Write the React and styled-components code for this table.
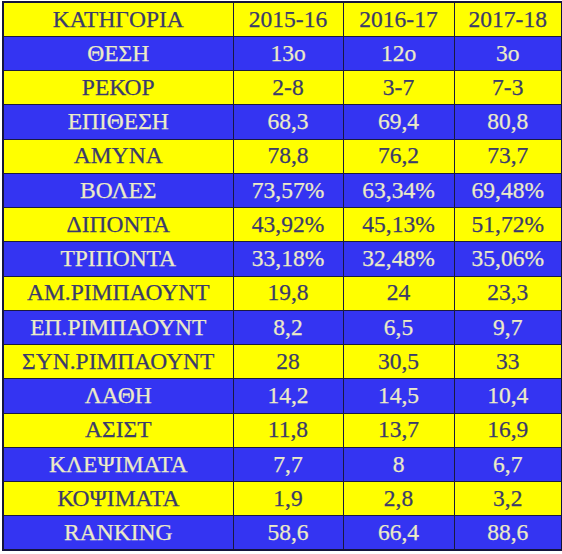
import React from 'react';
import styled, { createGlobalStyle } from 'styled-components';

const GlobalStyle = createGlobalStyle`
  body {
    margin: 0;
    background: #ffffff;
    font-family: "Liberation Serif", "Times New Roman", serif;
  }
`;

const Page = styled.div`
  padding: 1px 0 0 2px;
`;

const Table = styled.table`
  border-collapse: collapse;
  width: 559px;
  table-layout: fixed;
  border: 2px solid #14143c;
`;

const Row = styled.tr`
  height: 34.25px;
  background: ${(p) => (p.$blue ? '#3434f2' : '#ffff00')};
  color: ${(p) => (p.$blue ? '#ecebc6' : '#3a3a6c')};
`;

const Cell = styled.td`
  border: 1px solid #1a1a40;
  text-align: center;
  padding: 0;
  line-height: 1;
  font-family: "Liberation Serif", "Times New Roman", serif;
  font-size: 23.5px;
  -webkit-text-stroke: 0.25px currentColor;
`;

const columns = ['ΚΑΤΗΓΟΡΙΑ', '2015-16', '2016-17', '2017-18'];

const rows = [
  ['ΘΕΣΗ', '13ο', '12ο', '3ο'],
  ['ΡΕΚΟΡ', '2-8', '3-7', '7-3'],
  ['ΕΠΙΘΕΣΗ', '68,3', '69,4', '80,8'],
  ['ΑΜΥΝΑ', '78,8', '76,2', '73,7'],
  ['ΒΟΛΕΣ', '73,57%', '63,34%', '69,48%'],
  ['ΔΙΠΟΝΤΑ', '43,92%', '45,13%', '51,72%'],
  ['ΤΡΙΠΟΝΤΑ', '33,18%', '32,48%', '35,06%'],
  ['ΑΜ.ΡΙΜΠΑΟΥΝΤ', '19,8', '24', '23,3'],
  ['ΕΠ.ΡΙΜΠΑΟΥΝΤ', '8,2', '6,5', '9,7'],
  ['ΣΥΝ.ΡΙΜΠΑΟΥΝΤ', '28', '30,5', '33'],
  ['ΛΑΘΗ', '14,2', '14,5', '10,4'],
  ['ΑΣΙΣΤ', '11,8', '13,7', '16,9'],
  ['ΚΛΕΨΙΜΑΤΑ', '7,7', '8', '6,7'],
  ['ΚΟΨΙΜΑΤΑ', '1,9', '2,8', '3,2'],
  ['RANKING', '58,6', '66,4', '88,6'],
];

const widths = [230, 110, 111, 108];

export default function App() {
  return (
    <Page>
      <GlobalStyle />
      <Table>
        <colgroup>
          {widths.map((w, i) => (
            <col key={i} style={{ width: w }} />
          ))}
        </colgroup>
        <tbody>
          <Row>
            {columns.map((c) => (
              <Cell key={c}>{c}</Cell>
            ))}
          </Row>
          {rows.map((r, i) => (
            <Row key={r[0]} $blue={i % 2 === 0}>
              {r.map((v, j) => (
                <Cell key={j}>{v}</Cell>
              ))}
            </Row>
          ))}
        </tbody>
      </Table>
    </Page>
  );
}
